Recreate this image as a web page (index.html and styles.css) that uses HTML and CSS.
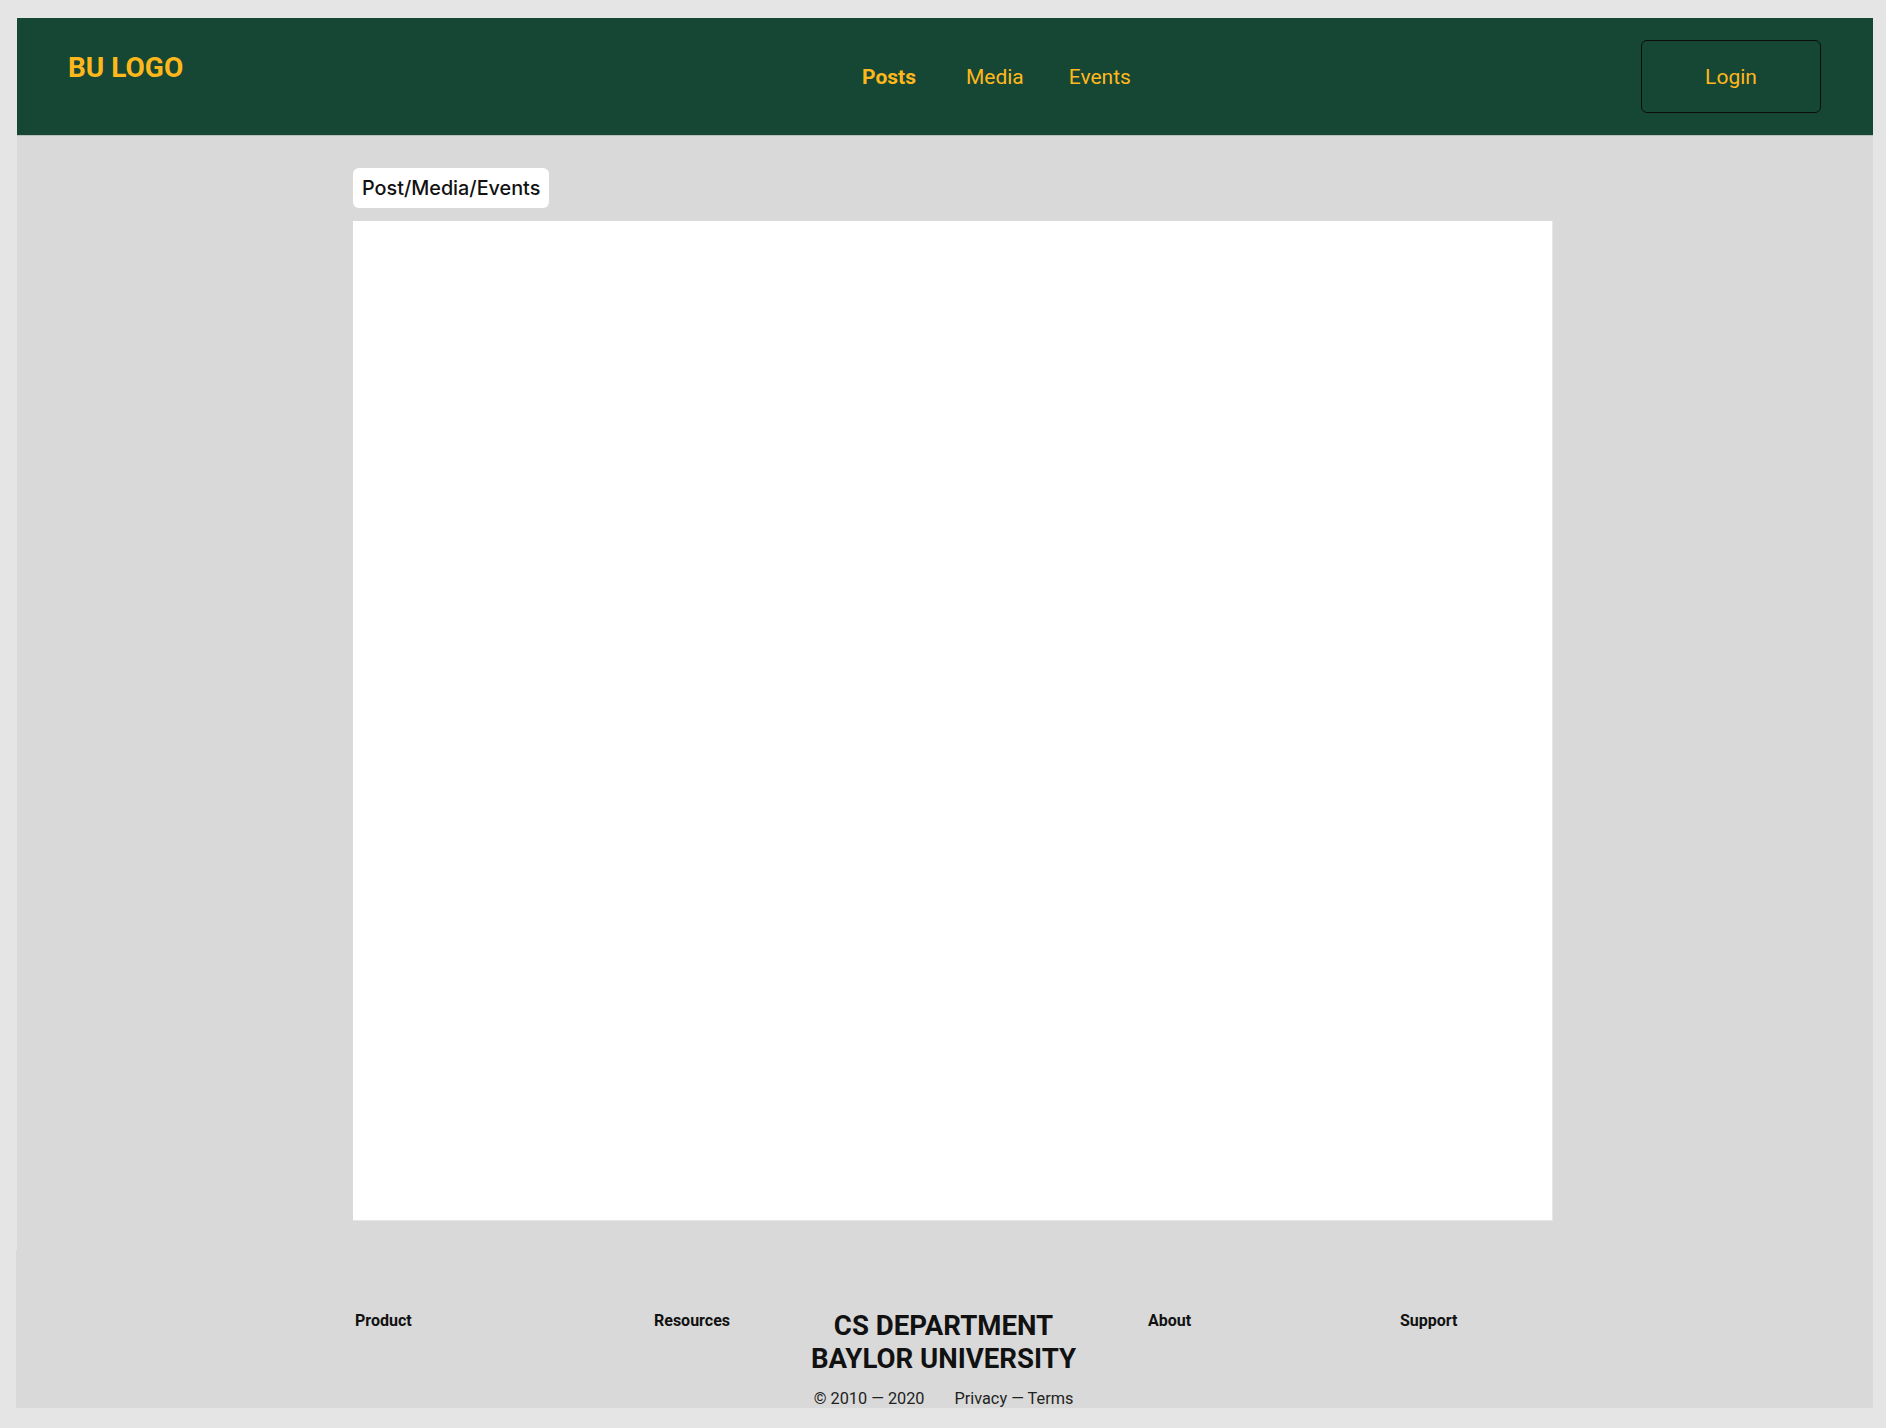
FILE: index.html
```html
<!DOCTYPE html>
<html lang="en">
<head>
<meta charset="utf-8">
<title>BU</title>
<link rel="stylesheet" href="styles.css">
</head>
<body>
<div class="page">
  <header class="topbar">
    <div class="logo">BU LOGO</div>
    <nav class="nav">
      <a class="nav-link active" href="#">Posts</a>
      <a class="nav-link" href="#">Media</a>
      <a class="nav-link" href="#">Events</a>
    </nav>
    <button class="login">Login</button>
  </header>
  <main class="main">
    <div class="container">
      <div class="tab">Post/Media/Events</div>
      <div class="panel"></div>
    </div>
  </main>
  <footer class="footer">
    <div class="container footer-grid">
      <div class="fcol"><h4>Product</h4></div>
      <div class="fcol"><h4>Resources</h4></div>
      <div class="brand">
        <h2>CS DEPARTMENT<br>BAYLOR UNIVERSITY</h2>
        <p class="copy"><span>© 2010 — 2020</span><span>Privacy — Terms</span></p>
      </div>
      <div class="fcol"><h4>About</h4></div>
      <div class="fcol"><h4>Support</h4></div>
    </div>
  </footer>
</div>
</body>
</html>
```
FILE: styles.css
```css
html, body {
  margin: 0;
  padding: 0;
  background: #e5e5e5;
}
body {
  font-family: Roboto, "Liberation Sans", sans-serif;
}
.page {
  margin: 18px 13px 20px 17px;
}
.topbar {
  height: 117px;
  background: #164734;
  border-bottom: 1px solid #b9bfbb;
  display: flex;
  align-items: center;
  padding: 0 52px 0 51px;
}
.logo {
  align-self: flex-start;
  margin-top: 33px;
  flex: 0 0 794px;
  font-size: 28px;
  font-weight: 700;
  color: #ffb81c;
}
.nav {
  display: flex;
}
.nav-link {
  font-size: 21px;
  color: #ffb81c;
  text-decoration: none;
}
.nav-link + .nav-link {
  margin-left: 45px;
}
.nav-link.active + .nav-link {
  margin-left: 50px;
}
.nav-link.active {
  font-weight: 700;
}
.login {
  margin-left: auto;
  width: 180px;
  height: 73px;
  background: transparent;
  border: 1.5px solid #0c0c0c;
  border-radius: 6px;
  color: #ffb81c;
  font-family: Roboto, "Liberation Sans", sans-serif;
  font-size: 21px;
}
.main {
  background: #d9d9d9;
  height: 1114px;
  padding-top: 32px;
  box-sizing: border-box;
}
.container {
  width: 1200px;
  margin-left: 336px;
}
.tab {
  display: inline-block;
  height: 40px;
  line-height: 40px;
  padding: 0 9px;
  background: #fff;
  border-radius: 6px;
  font-family: Inter, "Noto Sans", sans-serif;
  font-size: 19.8px;
  font-weight: 500;
  color: #111;
}
.panel {
  margin-top: 13px;
  height: 1000px;
  background: #fff;
  box-sizing: border-box;
  border-right: 1px solid #e6e6e6;
  border-bottom: 1px solid #e6e6e6;
}
.footer {
  background: #d9d9d9;
  height: 158px;
  overflow: hidden;
  margin-left: -1px;
  padding-top: 59px;
  box-sizing: border-box;
}
.footer .container {
  margin-left: 339px;
}
.footer-grid {
  display: flex;
  align-items: flex-start;
}
.fcol h4 {
  margin: 0;
  font-size: 16px;
  line-height: 24px;
  font-weight: 700;
  color: #111;
}
.fcol:nth-child(1) { width: 299px; }
.fcol:nth-child(2) { width: 157px; }
.brand {
  width: 265px;
  margin-right: 72px;
  text-align: center;
}
.fcol:nth-child(4) { width: 252px; }
.brand h2 {
  margin: 0;
  font-size: 27.6px;
  line-height: 33px;
  font-weight: 700;
  color: #111;
  white-space: nowrap;
}
.copy {
  margin: 14px 0 0;
  font-size: 16.3px;
  line-height: 20px;
  color: #222;
  white-space: nowrap;
  display: flex;
  justify-content: center;
  gap: 30px;
}
```
